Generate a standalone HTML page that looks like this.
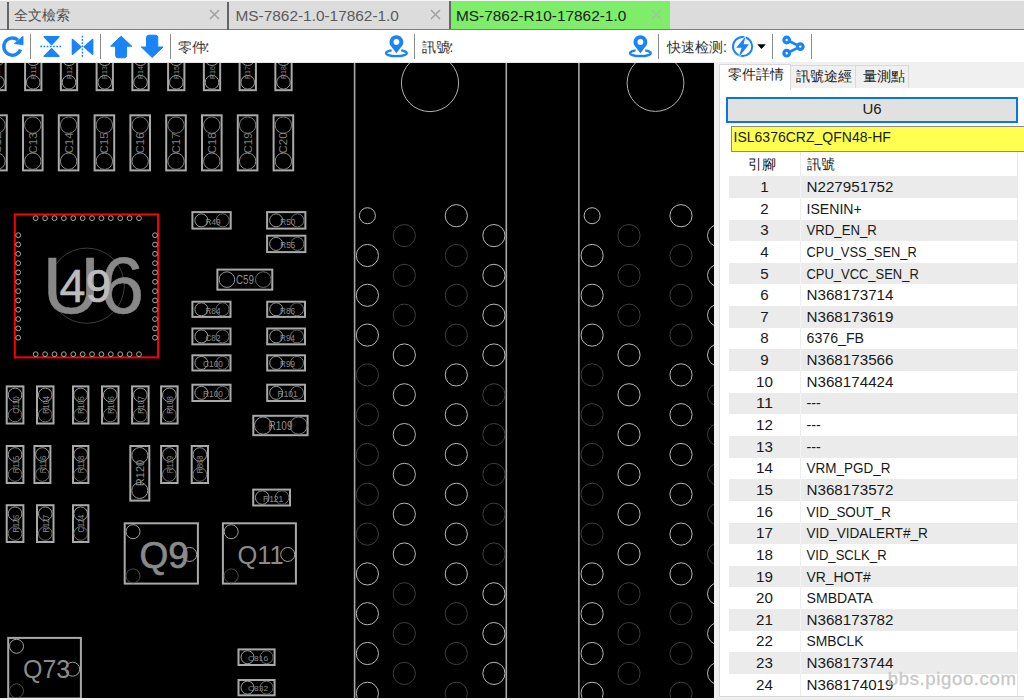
<!DOCTYPE html>
<html><head><meta charset="utf-8">
<style>
*{margin:0;padding:0;box-sizing:border-box}
html,body{width:1024px;height:700px;overflow:hidden;background:#f0f0f0;font-family:"Liberation Sans",sans-serif}
.abs{position:absolute}
#tabbar{left:0;top:0;width:1024px;height:30px;background:#dcdcdc;border-top:1px solid #f4f4f4;border-bottom:1px solid #7c7c7c}
.tsep{position:absolute;top:1px;width:2px;height:28px;background:#656565}
.ttxt{position:absolute;top:0;height:29px;line-height:29px;font-size:15.4px;color:#5a5a5a;white-space:nowrap}
.tx{position:absolute;top:8.2px;width:11px;height:11px}
#toolbar{left:0;top:30px;width:1024px;height:32px;background:#fff}
#tbline{left:0;top:62px;width:1024px;height:1px;background:#e6e6e6}
.sep{position:absolute;top:34px;width:1px;height:25px;background:#8a8a8a}
.lbl{position:absolute;top:36.8px;height:20px;line-height:20px;font-size:14px;color:#303030;white-space:nowrap}
#pcb{left:0;top:63px;width:714px;height:635px;background:#000;overflow:hidden}
#panel{left:714px;top:62px;width:310px;height:638px;background:#f0f0f0}
.row{position:absolute;left:729px;width:288px;height:21.64px;font-size:14.5px;color:#1a1a1a;line-height:23px}
.pin{position:absolute;left:0;width:70px;text-align:center}
.sig{position:absolute;left:77.5px;letter-spacing:0.35px}
</style></head><body>
<div id="tabbar" class="abs">
  <div class="tsep" style="left:6.5px"></div>
  <div class="ttxt" style="left:14px;color:#505050;font-size:14px">全文檢索</div>
  <svg class="tx" style="left:208.5px" viewBox="0 0 11 11"><path d="M1 1L10 10M10 1L1 10" stroke="#a2a2a2" stroke-width="1.6"/></svg>
  <div class="tsep" style="left:227px"></div>
  <div class="ttxt" style="left:235.5px">MS-7862-1.0-17862-1.0</div>
  <svg class="tx" style="left:429.5px" viewBox="0 0 11 11"><path d="M1 1L10 10M10 1L1 10" stroke="#a2a2a2" stroke-width="1.6"/></svg>
  <div class="abs" style="left:448.5px;top:0;width:221px;height:28px;background:#7ded6a;border-left:2px solid #666"></div>
  <div class="ttxt" style="left:456px;color:#1c1c1c">MS-7862-R10-17862-1.0</div>
  <svg class="tx" style="left:650.5px" viewBox="0 0 11 11"><path d="M1 1L10 10M10 1L1 10" stroke="#a8c0a4" stroke-width="1.6"/></svg>
</div>
<div id="toolbar" class="abs"></div>
<div id="tbline" class="abs"></div>
<!-- toolbar icons -->
<svg class="abs" style="left:0;top:30px" width="820" height="32" viewBox="0 30 820 32">
  <!-- refresh -->
  <path d="M20.5 49.5 A8.6 8.6 0 1 1 17.9 40" fill="none" stroke="#1a84f6" stroke-width="3.4"/>
  <path d="M23.1 36.3 L23.1 44.9 L14.1 43.6 Z" fill="#1a84f6" stroke="#1a84f6" stroke-width="0.6" stroke-linejoin="round"/>
  <!-- flip v -->
  <path d="M44.2 36.8 L59 36.8 L51.6 44.6 Z" fill="#1a84f6" stroke="#1a84f6" stroke-width="1.5" stroke-linejoin="round"/>
  <path d="M44.2 56.3 L59 56.3 L51.6 48.8 Z" fill="#1a84f6" stroke="#1a84f6" stroke-width="1.5" stroke-linejoin="round"/>
  <path d="M40.3 46.6 H62.3" stroke="#1a84f6" stroke-width="1.5" stroke-dasharray="1.7 1.5"/>
  <!-- flip h -->
  <path d="M72.5 39.5 L72.5 54.2 L80.8 46.8 Z" fill="#1a84f6" stroke="#1a84f6" stroke-width="1.6" stroke-linejoin="round"/>
  <path d="M92.6 39.5 L92.6 54.2 L84.3 46.8 Z" fill="#1a84f6" stroke="#1a84f6" stroke-width="1.6" stroke-linejoin="round"/>
  <path d="M82.4 35.8 V57.8" stroke="#1a84f6" stroke-width="1.5" stroke-dasharray="1.7 1.5"/>
  <!-- up arrow -->
  <path d="M121.2 36.2 L131.8 46.2 L126.6 46.2 L126.6 55.5 Q126.6 57.8 124.3 57.8 L118 57.8 Q115.6 57.8 115.6 55.5 L115.6 46.2 L110.6 46.2 Z" fill="#1a84f6" stroke="#1a84f6" stroke-width="1" stroke-linejoin="round"/>
  <!-- down arrow -->
  <path d="M152.2 57.5 L163 47 L157.8 47 L157.8 37.6 Q157.8 35.2 155.4 35.2 L149 35.2 Q146.5 35.2 146.5 37.6 L146.5 47 L141.3 47 Z" fill="#1a84f6" stroke="#1a84f6" stroke-width="1" stroke-linejoin="round"/>
  <!-- pin 1 -->
  <g id="pin">
    <path d="M396.4 53.2 L390.1 45 A6.9 6.9 0 1 1 402.7 45 Z" fill="#1a84f6"/>
    <circle cx="396.4" cy="42" r="2.9" fill="#fff"/>
    <path d="M391.6 50.37 A10.4 3.1 0 1 0 401.2 50.37" fill="none" stroke="#1a84f6" stroke-width="2.3"/>
  </g>
  <use href="#pin" x="244" y="0"/>
  <!-- lightning -->
  <circle cx="742.6" cy="46.5" r="9.6" fill="none" stroke="#1a84f6" stroke-width="2"/>
  <path d="M745.6 36.2 L736.2 47.8 L741.6 47.8 L738.6 57.4 L749 44.2 L743.6 44.2 Z" fill="#1a84f6" stroke="#fff" stroke-width="1.3" paint-order="stroke" stroke-linejoin="miter"/>
  <path d="M757.2 44.2 H765.8 L761.5 49 Z" fill="#000"/>
  <!-- share -->
  <path d="M786.7 40 L800.3 46.6 L786.7 53.2" fill="none" stroke="#1a84f6" stroke-width="2.7"/>
  <circle cx="786.7" cy="40" r="2.8" fill="#fff" stroke="#1a84f6" stroke-width="3.2"/>
  <circle cx="786.7" cy="53.2" r="2.8" fill="#fff" stroke="#1a84f6" stroke-width="3.2"/>
  <circle cx="800.3" cy="46.6" r="2.8" fill="#fff" stroke="#1a84f6" stroke-width="3.2"/>
</svg>
<div class="sep" style="left:30px"></div>
<div class="sep" style="left:100px"></div>
<div class="sep" style="left:170px"></div>
<div class="sep" style="left:414px"></div>
<div class="sep" style="left:658px"></div>
<div class="sep" style="left:772px"></div>
<div class="sep" style="left:811px"></div>
<div class="lbl" style="left:177.5px">零件:</div><div class="abs" style="left:202.5px;top:38.5px;font-size:11px;color:#555">y</div>
<div class="lbl" style="left:421.5px">訊號:</div><div class="abs" style="left:446.5px;top:38.5px;font-size:11px;color:#555">y</div>
<div class="lbl" style="left:667px">快速检测:</div>

<div id="pcb" class="abs">
<svg width="714" height="635" viewBox="0 63 714 635" style="display:block;font-family:'Liberation Sans',sans-serif">
<rect x="-10.65" y="41" width="16.3" height="49.2" fill="none" stroke="#a9a9a9" stroke-width="2"/>
<circle cx="-2.5" cy="82.3" r="6.8" fill="none" stroke="#9a9a9a" stroke-width="1"/>
<circle cx="-2.5" cy="58.5" r="7" fill="none" stroke="#9a9a9a" stroke-width="1"/>
<text x="-2.5" y="72.5" font-size="8" fill="#8a8a8a" text-anchor="middle" dominant-baseline="central" font-weight="normal" transform="rotate(-90 -2.5 72.5)" textLength="13" lengthAdjust="spacingAndGlyphs">R10</text>
<rect x="25.1" y="41" width="16.3" height="49.2" fill="none" stroke="#a9a9a9" stroke-width="2"/>
<circle cx="33.25" cy="82.3" r="6.8" fill="none" stroke="#9a9a9a" stroke-width="1"/>
<circle cx="33.25" cy="58.5" r="7" fill="none" stroke="#9a9a9a" stroke-width="1"/>
<text x="33.25" y="72.5" font-size="8" fill="#8a8a8a" text-anchor="middle" dominant-baseline="central" font-weight="normal" transform="rotate(-90 33.25 72.5)" textLength="13" lengthAdjust="spacingAndGlyphs">R11</text>
<rect x="60.85" y="41" width="16.3" height="49.2" fill="none" stroke="#a9a9a9" stroke-width="2"/>
<circle cx="69" cy="82.3" r="6.8" fill="none" stroke="#9a9a9a" stroke-width="1"/>
<circle cx="69" cy="58.5" r="7" fill="none" stroke="#9a9a9a" stroke-width="1"/>
<text x="69" y="72.5" font-size="8" fill="#8a8a8a" text-anchor="middle" dominant-baseline="central" font-weight="normal" transform="rotate(-90 69 72.5)" textLength="13" lengthAdjust="spacingAndGlyphs">R12</text>
<rect x="96.6" y="41" width="16.3" height="49.2" fill="none" stroke="#a9a9a9" stroke-width="2"/>
<circle cx="104.75" cy="82.3" r="6.8" fill="none" stroke="#9a9a9a" stroke-width="1"/>
<circle cx="104.75" cy="58.5" r="7" fill="none" stroke="#9a9a9a" stroke-width="1"/>
<text x="104.75" y="72.5" font-size="8" fill="#8a8a8a" text-anchor="middle" dominant-baseline="central" font-weight="normal" transform="rotate(-90 104.75 72.5)" textLength="13" lengthAdjust="spacingAndGlyphs">R13</text>
<rect x="132.35" y="41" width="16.3" height="49.2" fill="none" stroke="#a9a9a9" stroke-width="2"/>
<circle cx="140.5" cy="82.3" r="6.8" fill="none" stroke="#9a9a9a" stroke-width="1"/>
<circle cx="140.5" cy="58.5" r="7" fill="none" stroke="#9a9a9a" stroke-width="1"/>
<text x="140.5" y="72.5" font-size="8" fill="#8a8a8a" text-anchor="middle" dominant-baseline="central" font-weight="normal" transform="rotate(-90 140.5 72.5)" textLength="13" lengthAdjust="spacingAndGlyphs">R14</text>
<rect x="168.1" y="41" width="16.3" height="49.2" fill="none" stroke="#a9a9a9" stroke-width="2"/>
<circle cx="176.25" cy="82.3" r="6.8" fill="none" stroke="#9a9a9a" stroke-width="1"/>
<circle cx="176.25" cy="58.5" r="7" fill="none" stroke="#9a9a9a" stroke-width="1"/>
<text x="176.25" y="72.5" font-size="8" fill="#8a8a8a" text-anchor="middle" dominant-baseline="central" font-weight="normal" transform="rotate(-90 176.25 72.5)" textLength="13" lengthAdjust="spacingAndGlyphs">R15</text>
<rect x="203.85" y="41" width="16.3" height="49.2" fill="none" stroke="#a9a9a9" stroke-width="2"/>
<circle cx="212" cy="82.3" r="6.8" fill="none" stroke="#9a9a9a" stroke-width="1"/>
<circle cx="212" cy="58.5" r="7" fill="none" stroke="#9a9a9a" stroke-width="1"/>
<text x="212" y="72.5" font-size="8" fill="#8a8a8a" text-anchor="middle" dominant-baseline="central" font-weight="normal" transform="rotate(-90 212 72.5)" textLength="13" lengthAdjust="spacingAndGlyphs">R16</text>
<rect x="239.6" y="41" width="16.3" height="49.2" fill="none" stroke="#a9a9a9" stroke-width="2"/>
<circle cx="247.75" cy="82.3" r="6.8" fill="none" stroke="#9a9a9a" stroke-width="1"/>
<circle cx="247.75" cy="58.5" r="7" fill="none" stroke="#9a9a9a" stroke-width="1"/>
<text x="247.75" y="72.5" font-size="8" fill="#8a8a8a" text-anchor="middle" dominant-baseline="central" font-weight="normal" transform="rotate(-90 247.75 72.5)" textLength="13" lengthAdjust="spacingAndGlyphs">R17</text>
<rect x="275.35" y="41" width="16.3" height="49.2" fill="none" stroke="#a9a9a9" stroke-width="2"/>
<circle cx="283.5" cy="82.3" r="6.8" fill="none" stroke="#9a9a9a" stroke-width="1"/>
<circle cx="283.5" cy="58.5" r="7" fill="none" stroke="#9a9a9a" stroke-width="1"/>
<text x="283.5" y="72.5" font-size="8" fill="#8a8a8a" text-anchor="middle" dominant-baseline="central" font-weight="normal" transform="rotate(-90 283.5 72.5)" textLength="13" lengthAdjust="spacingAndGlyphs">R18</text>
<rect x="-12.8" y="115.3" width="19.6" height="55.1" fill="none" stroke="#a9a9a9" stroke-width="2"/>
<circle cx="-3" cy="125.1" r="8.2" fill="none" stroke="#7a7a7a" stroke-width="1"/>
<circle cx="-3" cy="161.2" r="8.2" fill="none" stroke="#8a8a8a" stroke-width="1"/>
<text x="-3" y="143" font-size="11.5" fill="#808080" text-anchor="middle" dominant-baseline="central" font-weight="normal" transform="rotate(-90 -3 143)">C12</text>
<rect x="23" y="115.3" width="19.6" height="55.1" fill="none" stroke="#a9a9a9" stroke-width="2"/>
<circle cx="32.8" cy="125.1" r="8.2" fill="none" stroke="#7a7a7a" stroke-width="1"/>
<circle cx="32.8" cy="161.2" r="8.2" fill="none" stroke="#8a8a8a" stroke-width="1"/>
<text x="32.8" y="143" font-size="11.5" fill="#808080" text-anchor="middle" dominant-baseline="central" font-weight="normal" transform="rotate(-90 32.8 143)">C13</text>
<rect x="58.8" y="115.3" width="19.6" height="55.1" fill="none" stroke="#a9a9a9" stroke-width="2"/>
<circle cx="68.6" cy="125.1" r="8.2" fill="none" stroke="#7a7a7a" stroke-width="1"/>
<circle cx="68.6" cy="161.2" r="8.2" fill="none" stroke="#8a8a8a" stroke-width="1"/>
<text x="68.6" y="143" font-size="11.5" fill="#808080" text-anchor="middle" dominant-baseline="central" font-weight="normal" transform="rotate(-90 68.6 143)">C14</text>
<rect x="94.6" y="115.3" width="19.6" height="55.1" fill="none" stroke="#a9a9a9" stroke-width="2"/>
<circle cx="104.4" cy="125.1" r="8.2" fill="none" stroke="#7a7a7a" stroke-width="1"/>
<circle cx="104.4" cy="161.2" r="8.2" fill="none" stroke="#8a8a8a" stroke-width="1"/>
<text x="104.4" y="143" font-size="11.5" fill="#808080" text-anchor="middle" dominant-baseline="central" font-weight="normal" transform="rotate(-90 104.4 143)">C15</text>
<rect x="130.4" y="115.3" width="19.6" height="55.1" fill="none" stroke="#a9a9a9" stroke-width="2"/>
<circle cx="140.2" cy="125.1" r="8.2" fill="none" stroke="#7a7a7a" stroke-width="1"/>
<circle cx="140.2" cy="161.2" r="8.2" fill="none" stroke="#8a8a8a" stroke-width="1"/>
<text x="140.2" y="143" font-size="11.5" fill="#808080" text-anchor="middle" dominant-baseline="central" font-weight="normal" transform="rotate(-90 140.2 143)">C16</text>
<rect x="166.2" y="115.3" width="19.6" height="55.1" fill="none" stroke="#a9a9a9" stroke-width="2"/>
<circle cx="176" cy="125.1" r="8.2" fill="none" stroke="#7a7a7a" stroke-width="1"/>
<circle cx="176" cy="161.2" r="8.2" fill="none" stroke="#8a8a8a" stroke-width="1"/>
<text x="176" y="143" font-size="11.5" fill="#808080" text-anchor="middle" dominant-baseline="central" font-weight="normal" transform="rotate(-90 176 143)">C17</text>
<rect x="202" y="115.3" width="19.6" height="55.1" fill="none" stroke="#a9a9a9" stroke-width="2"/>
<circle cx="211.8" cy="125.1" r="8.2" fill="none" stroke="#7a7a7a" stroke-width="1"/>
<circle cx="211.8" cy="161.2" r="8.2" fill="none" stroke="#8a8a8a" stroke-width="1"/>
<text x="211.8" y="143" font-size="11.5" fill="#808080" text-anchor="middle" dominant-baseline="central" font-weight="normal" transform="rotate(-90 211.8 143)">C18</text>
<rect x="237.8" y="115.3" width="19.6" height="55.1" fill="none" stroke="#a9a9a9" stroke-width="2"/>
<circle cx="247.6" cy="125.1" r="8.2" fill="none" stroke="#7a7a7a" stroke-width="1"/>
<circle cx="247.6" cy="161.2" r="8.2" fill="none" stroke="#8a8a8a" stroke-width="1"/>
<text x="247.6" y="143" font-size="11.5" fill="#808080" text-anchor="middle" dominant-baseline="central" font-weight="normal" transform="rotate(-90 247.6 143)">C19</text>
<rect x="273.6" y="115.3" width="19.6" height="55.1" fill="none" stroke="#a9a9a9" stroke-width="2"/>
<circle cx="283.4" cy="125.1" r="8.2" fill="none" stroke="#7a7a7a" stroke-width="1"/>
<circle cx="283.4" cy="161.2" r="8.2" fill="none" stroke="#8a8a8a" stroke-width="1"/>
<text x="283.4" y="143" font-size="11.5" fill="#808080" text-anchor="middle" dominant-baseline="central" font-weight="normal" transform="rotate(-90 283.4 143)">C20</text>
<rect x="14.8" y="214.4" width="143.3" height="143" fill="none" stroke="#ff0000" stroke-width="2"/>
<circle cx="35.7" cy="218.2" r="2.4" fill="none" stroke="#a8a8a8" stroke-width="1"/>
<circle cx="35.7" cy="354.2" r="2.4" fill="none" stroke="#a8a8a8" stroke-width="1"/>
<circle cx="18.2" cy="235.2" r="2.4" fill="none" stroke="#a8a8a8" stroke-width="1"/>
<circle cx="155" cy="235.2" r="2.4" fill="none" stroke="#a8a8a8" stroke-width="1"/>
<circle cx="45.09" cy="218.2" r="2.4" fill="none" stroke="#a8a8a8" stroke-width="1"/>
<circle cx="45.09" cy="354.2" r="2.4" fill="none" stroke="#a8a8a8" stroke-width="1"/>
<circle cx="18.2" cy="244.52" r="2.4" fill="none" stroke="#a8a8a8" stroke-width="1"/>
<circle cx="155" cy="244.52" r="2.4" fill="none" stroke="#a8a8a8" stroke-width="1"/>
<circle cx="54.48" cy="218.2" r="2.4" fill="none" stroke="#a8a8a8" stroke-width="1"/>
<circle cx="54.48" cy="354.2" r="2.4" fill="none" stroke="#a8a8a8" stroke-width="1"/>
<circle cx="18.2" cy="253.84" r="2.4" fill="none" stroke="#a8a8a8" stroke-width="1"/>
<circle cx="155" cy="253.84" r="2.4" fill="none" stroke="#a8a8a8" stroke-width="1"/>
<circle cx="63.87" cy="218.2" r="2.4" fill="none" stroke="#a8a8a8" stroke-width="1"/>
<circle cx="63.87" cy="354.2" r="2.4" fill="none" stroke="#a8a8a8" stroke-width="1"/>
<circle cx="18.2" cy="263.16" r="2.4" fill="none" stroke="#a8a8a8" stroke-width="1"/>
<circle cx="155" cy="263.16" r="2.4" fill="none" stroke="#a8a8a8" stroke-width="1"/>
<circle cx="73.26" cy="218.2" r="2.4" fill="none" stroke="#a8a8a8" stroke-width="1"/>
<circle cx="73.26" cy="354.2" r="2.4" fill="none" stroke="#a8a8a8" stroke-width="1"/>
<circle cx="18.2" cy="272.48" r="2.4" fill="none" stroke="#a8a8a8" stroke-width="1"/>
<circle cx="155" cy="272.48" r="2.4" fill="none" stroke="#a8a8a8" stroke-width="1"/>
<circle cx="82.65" cy="218.2" r="2.4" fill="none" stroke="#a8a8a8" stroke-width="1"/>
<circle cx="82.65" cy="354.2" r="2.4" fill="none" stroke="#a8a8a8" stroke-width="1"/>
<circle cx="18.2" cy="281.8" r="2.4" fill="none" stroke="#a8a8a8" stroke-width="1"/>
<circle cx="155" cy="281.8" r="2.4" fill="none" stroke="#a8a8a8" stroke-width="1"/>
<circle cx="92.04" cy="218.2" r="2.4" fill="none" stroke="#a8a8a8" stroke-width="1"/>
<circle cx="92.04" cy="354.2" r="2.4" fill="none" stroke="#a8a8a8" stroke-width="1"/>
<circle cx="18.2" cy="291.12" r="2.4" fill="none" stroke="#a8a8a8" stroke-width="1"/>
<circle cx="155" cy="291.12" r="2.4" fill="none" stroke="#a8a8a8" stroke-width="1"/>
<circle cx="101.43" cy="218.2" r="2.4" fill="none" stroke="#a8a8a8" stroke-width="1"/>
<circle cx="101.43" cy="354.2" r="2.4" fill="none" stroke="#a8a8a8" stroke-width="1"/>
<circle cx="18.2" cy="300.44" r="2.4" fill="none" stroke="#a8a8a8" stroke-width="1"/>
<circle cx="155" cy="300.44" r="2.4" fill="none" stroke="#a8a8a8" stroke-width="1"/>
<circle cx="110.82" cy="218.2" r="2.4" fill="none" stroke="#a8a8a8" stroke-width="1"/>
<circle cx="110.82" cy="354.2" r="2.4" fill="none" stroke="#a8a8a8" stroke-width="1"/>
<circle cx="18.2" cy="309.76" r="2.4" fill="none" stroke="#a8a8a8" stroke-width="1"/>
<circle cx="155" cy="309.76" r="2.4" fill="none" stroke="#a8a8a8" stroke-width="1"/>
<circle cx="120.21" cy="218.2" r="2.4" fill="none" stroke="#a8a8a8" stroke-width="1"/>
<circle cx="120.21" cy="354.2" r="2.4" fill="none" stroke="#a8a8a8" stroke-width="1"/>
<circle cx="18.2" cy="319.08" r="2.4" fill="none" stroke="#a8a8a8" stroke-width="1"/>
<circle cx="155" cy="319.08" r="2.4" fill="none" stroke="#a8a8a8" stroke-width="1"/>
<circle cx="129.6" cy="218.2" r="2.4" fill="none" stroke="#a8a8a8" stroke-width="1"/>
<circle cx="129.6" cy="354.2" r="2.4" fill="none" stroke="#a8a8a8" stroke-width="1"/>
<circle cx="18.2" cy="328.4" r="2.4" fill="none" stroke="#a8a8a8" stroke-width="1"/>
<circle cx="155" cy="328.4" r="2.4" fill="none" stroke="#a8a8a8" stroke-width="1"/>
<circle cx="138.99" cy="218.2" r="2.4" fill="none" stroke="#a8a8a8" stroke-width="1"/>
<circle cx="138.99" cy="354.2" r="2.4" fill="none" stroke="#a8a8a8" stroke-width="1"/>
<circle cx="18.2" cy="337.72" r="2.4" fill="none" stroke="#a8a8a8" stroke-width="1"/>
<circle cx="155" cy="337.72" r="2.4" fill="none" stroke="#a8a8a8" stroke-width="1"/>
<circle cx="86.7" cy="285.7" r="37.6" fill="none" stroke="#3c3c3c" stroke-width="1"/>
<text x="42.5" y="313.2" font-size="79.5" fill="#888" stroke="#888" stroke-width="0.5" text-anchor="start">U6</text>
<text x="59.6" y="302.3" font-size="46.5" fill="#bcbcbc" stroke="#bcbcbc" stroke-width="0.6" text-anchor="start">49</text>
<rect x="192.4" y="212.1" width="38.3" height="16.5" fill="none" stroke="#a9a9a9" stroke-width="2"/>
<circle cx="201.4" cy="220.35" r="6.5" fill="none" stroke="#9a9a9a" stroke-width="1"/>
<circle cx="222.7" cy="220.35" r="6.5" fill="none" stroke="#6a6a6a" stroke-width="1"/>
<text x="213.05" y="221.35" font-size="9.6" fill="#8a8a8a" text-anchor="middle" dominant-baseline="central" font-weight="normal" textLength="15" lengthAdjust="spacingAndGlyphs">R49</text>
<rect x="267.1" y="212.1" width="38.3" height="16.5" fill="none" stroke="#a9a9a9" stroke-width="2"/>
<circle cx="276.1" cy="220.35" r="6.5" fill="none" stroke="#9a9a9a" stroke-width="1"/>
<circle cx="297.4" cy="220.35" r="6.5" fill="none" stroke="#6a6a6a" stroke-width="1"/>
<text x="287.75" y="221.35" font-size="9.6" fill="#8a8a8a" text-anchor="middle" dominant-baseline="central" font-weight="normal" textLength="15" lengthAdjust="spacingAndGlyphs">R50</text>
<rect x="267.1" y="235.7" width="38.3" height="16.4" fill="none" stroke="#a9a9a9" stroke-width="2"/>
<circle cx="276.1" cy="243.9" r="6.5" fill="none" stroke="#9a9a9a" stroke-width="1"/>
<circle cx="297.4" cy="243.9" r="6.5" fill="none" stroke="#6a6a6a" stroke-width="1"/>
<text x="287.75" y="244.9" font-size="9.6" fill="#8a8a8a" text-anchor="middle" dominant-baseline="central" font-weight="normal" textLength="15" lengthAdjust="spacingAndGlyphs">R55</text>
<rect x="217.4" y="269.6" width="54.9" height="20.1" fill="none" stroke="#a9a9a9" stroke-width="2"/>
<circle cx="226.9" cy="279.6" r="7.8" fill="none" stroke="#9a9a9a" stroke-width="1"/>
<circle cx="263.3" cy="279.6" r="7.8" fill="none" stroke="#6a6a6a" stroke-width="1"/>
<text x="245" y="280" font-size="12" fill="#8c8c8c" text-anchor="middle" dominant-baseline="central" font-weight="normal" textLength="18" lengthAdjust="spacingAndGlyphs">C59</text>
<rect x="192.4" y="301.7" width="38.1" height="15.2" fill="none" stroke="#a9a9a9" stroke-width="2"/>
<circle cx="201.4" cy="309.3" r="6.5" fill="none" stroke="#9a9a9a" stroke-width="1"/>
<circle cx="222.5" cy="309.3" r="6.5" fill="none" stroke="#6a6a6a" stroke-width="1"/>
<text x="212.95" y="310.3" font-size="9.6" fill="#8a8a8a" text-anchor="middle" dominant-baseline="central" font-weight="normal" textLength="15" lengthAdjust="spacingAndGlyphs">R84</text>
<rect x="267.2" y="301.7" width="37.8" height="15.2" fill="none" stroke="#a9a9a9" stroke-width="2"/>
<circle cx="276.2" cy="309.3" r="6.5" fill="none" stroke="#9a9a9a" stroke-width="1"/>
<circle cx="297" cy="309.3" r="6.5" fill="none" stroke="#6a6a6a" stroke-width="1"/>
<text x="287.6" y="310.3" font-size="9.6" fill="#8a8a8a" text-anchor="middle" dominant-baseline="central" font-weight="normal" textLength="15" lengthAdjust="spacingAndGlyphs">R86</text>
<rect x="192.4" y="328.5" width="38.1" height="15.8" fill="none" stroke="#a9a9a9" stroke-width="2"/>
<circle cx="201.4" cy="336.4" r="6.5" fill="none" stroke="#9a9a9a" stroke-width="1"/>
<circle cx="222.5" cy="336.4" r="6.5" fill="none" stroke="#6a6a6a" stroke-width="1"/>
<text x="212.95" y="337.4" font-size="9.6" fill="#8a8a8a" text-anchor="middle" dominant-baseline="central" font-weight="normal" textLength="15" lengthAdjust="spacingAndGlyphs">C82</text>
<rect x="267.2" y="328.5" width="37.8" height="15.8" fill="none" stroke="#a9a9a9" stroke-width="2"/>
<circle cx="276.2" cy="336.4" r="6.5" fill="none" stroke="#9a9a9a" stroke-width="1"/>
<circle cx="297" cy="336.4" r="6.5" fill="none" stroke="#6a6a6a" stroke-width="1"/>
<text x="287.6" y="337.4" font-size="9.6" fill="#8a8a8a" text-anchor="middle" dominant-baseline="central" font-weight="normal" textLength="15" lengthAdjust="spacingAndGlyphs">R94</text>
<rect x="192.4" y="355.3" width="38.1" height="15.2" fill="none" stroke="#a9a9a9" stroke-width="2"/>
<circle cx="201.4" cy="362.9" r="6.5" fill="none" stroke="#9a9a9a" stroke-width="1"/>
<circle cx="222.5" cy="362.9" r="6.5" fill="none" stroke="#6a6a6a" stroke-width="1"/>
<text x="212.95" y="363.9" font-size="9.6" fill="#8a8a8a" text-anchor="middle" dominant-baseline="central" font-weight="normal" textLength="20" lengthAdjust="spacingAndGlyphs">C100</text>
<rect x="267.2" y="355.3" width="37.8" height="15.2" fill="none" stroke="#a9a9a9" stroke-width="2"/>
<circle cx="276.2" cy="362.9" r="6.5" fill="none" stroke="#9a9a9a" stroke-width="1"/>
<circle cx="297" cy="362.9" r="6.5" fill="none" stroke="#6a6a6a" stroke-width="1"/>
<text x="287.6" y="363.9" font-size="9.6" fill="#8a8a8a" text-anchor="middle" dominant-baseline="central" font-weight="normal" textLength="15" lengthAdjust="spacingAndGlyphs">R99</text>
<rect x="192.4" y="384.7" width="38.1" height="16.3" fill="none" stroke="#a9a9a9" stroke-width="2"/>
<circle cx="201.4" cy="392.85" r="6.5" fill="none" stroke="#9a9a9a" stroke-width="1"/>
<circle cx="222.5" cy="392.85" r="6.5" fill="none" stroke="#6a6a6a" stroke-width="1"/>
<text x="212.95" y="393.85" font-size="9.6" fill="#8a8a8a" text-anchor="middle" dominant-baseline="central" font-weight="normal" textLength="20" lengthAdjust="spacingAndGlyphs">R100</text>
<rect x="267.2" y="384.7" width="37.8" height="16.3" fill="none" stroke="#a9a9a9" stroke-width="2"/>
<circle cx="276.2" cy="392.85" r="6.5" fill="none" stroke="#9a9a9a" stroke-width="1"/>
<circle cx="297" cy="392.85" r="6.5" fill="none" stroke="#6a6a6a" stroke-width="1"/>
<text x="287.6" y="393.85" font-size="9.6" fill="#8a8a8a" text-anchor="middle" dominant-baseline="central" font-weight="normal" textLength="20" lengthAdjust="spacingAndGlyphs">R101</text>
<rect x="253.3" y="415.8" width="54.3" height="19.4" fill="none" stroke="#a9a9a9" stroke-width="2"/>
<circle cx="263.1" cy="425.6" r="8.6" fill="none" stroke="#9a9a9a" stroke-width="1"/>
<circle cx="298.6" cy="425.6" r="8.6" fill="none" stroke="#7a7a7a" stroke-width="1"/>
<text x="280.5" y="426" font-size="12" fill="#8c8c8c" text-anchor="middle" dominant-baseline="central" font-weight="normal" textLength="24" lengthAdjust="spacingAndGlyphs">R109</text>
<rect x="253.2" y="489.6" width="36.8" height="15.9" fill="none" stroke="#a9a9a9" stroke-width="2"/>
<circle cx="262.2" cy="497.55" r="6.8" fill="none" stroke="#9a9a9a" stroke-width="1"/>
<circle cx="282" cy="497.55" r="6.8" fill="none" stroke="#6a6a6a" stroke-width="1"/>
<text x="273.1" y="498.55" font-size="9" fill="#8a8a8a" text-anchor="middle" dominant-baseline="central" font-weight="normal" textLength="20" lengthAdjust="spacingAndGlyphs">R121</text>
<rect x="238.5" y="649.4" width="36.1" height="15.6" fill="none" stroke="#a9a9a9" stroke-width="2"/>
<circle cx="247.5" cy="657.2" r="6.5" fill="none" stroke="#9a9a9a" stroke-width="1"/>
<circle cx="266.6" cy="657.2" r="6.5" fill="none" stroke="#6a6a6a" stroke-width="1"/>
<text x="258.05" y="658.2" font-size="8" fill="#8a8a8a" text-anchor="middle" dominant-baseline="central" font-weight="normal" textLength="20" lengthAdjust="spacingAndGlyphs">C816</text>
<rect x="238.5" y="680" width="36.1" height="15.3" fill="none" stroke="#a9a9a9" stroke-width="2"/>
<circle cx="247.5" cy="687.65" r="6.5" fill="none" stroke="#9a9a9a" stroke-width="1"/>
<circle cx="266.6" cy="687.65" r="6.5" fill="none" stroke="#6a6a6a" stroke-width="1"/>
<text x="258.05" y="688.65" font-size="8" fill="#8a8a8a" text-anchor="middle" dominant-baseline="central" font-weight="normal" textLength="20" lengthAdjust="spacingAndGlyphs">C832</text>
<rect x="6.7" y="386.4" width="16.7" height="37.1" fill="none" stroke="#a9a9a9" stroke-width="2"/>
<circle cx="15.05" cy="394.9" r="6.8" fill="none" stroke="#9a9a9a" stroke-width="1"/>
<circle cx="15.05" cy="415" r="6.8" fill="none" stroke="#6f6f6f" stroke-width="1"/>
<text x="15.55" y="404.95" font-size="8.5" fill="#8a8a8a" text-anchor="middle" dominant-baseline="central" font-weight="normal" transform="rotate(-90 15.55 404.95)" textLength="17.6" lengthAdjust="spacingAndGlyphs">C110</text>
<rect x="37" y="386.4" width="16.5" height="37.1" fill="none" stroke="#a9a9a9" stroke-width="2"/>
<circle cx="45.25" cy="394.9" r="6.8" fill="none" stroke="#9a9a9a" stroke-width="1"/>
<circle cx="45.25" cy="415" r="6.8" fill="none" stroke="#6f6f6f" stroke-width="1"/>
<text x="45.75" y="404.95" font-size="8.5" fill="#8a8a8a" text-anchor="middle" dominant-baseline="central" font-weight="normal" transform="rotate(-90 45.75 404.95)" textLength="17.6" lengthAdjust="spacingAndGlyphs">R104</text>
<rect x="73" y="386.4" width="15.4" height="37.1" fill="none" stroke="#a9a9a9" stroke-width="2"/>
<circle cx="80.7" cy="394.9" r="6.8" fill="none" stroke="#9a9a9a" stroke-width="1"/>
<circle cx="80.7" cy="415" r="6.8" fill="none" stroke="#6f6f6f" stroke-width="1"/>
<text x="81.2" y="404.95" font-size="8.5" fill="#8a8a8a" text-anchor="middle" dominant-baseline="central" font-weight="normal" transform="rotate(-90 81.2 404.95)" textLength="17.6" lengthAdjust="spacingAndGlyphs">R105</text>
<rect x="102" y="386.4" width="16.5" height="37.1" fill="none" stroke="#a9a9a9" stroke-width="2"/>
<circle cx="110.25" cy="394.9" r="6.8" fill="none" stroke="#9a9a9a" stroke-width="1"/>
<circle cx="110.25" cy="415" r="6.8" fill="none" stroke="#6f6f6f" stroke-width="1"/>
<text x="110.75" y="404.95" font-size="8.5" fill="#8a8a8a" text-anchor="middle" dominant-baseline="central" font-weight="normal" transform="rotate(-90 110.75 404.95)" textLength="17.6" lengthAdjust="spacingAndGlyphs">R106</text>
<rect x="132.1" y="386.4" width="16.5" height="37.1" fill="none" stroke="#a9a9a9" stroke-width="2"/>
<circle cx="140.35" cy="394.9" r="6.8" fill="none" stroke="#9a9a9a" stroke-width="1"/>
<circle cx="140.35" cy="415" r="6.8" fill="none" stroke="#6f6f6f" stroke-width="1"/>
<text x="140.85" y="404.95" font-size="8.5" fill="#8a8a8a" text-anchor="middle" dominant-baseline="central" font-weight="normal" transform="rotate(-90 140.85 404.95)" textLength="17.6" lengthAdjust="spacingAndGlyphs">R107</text>
<rect x="161.1" y="386.4" width="16.5" height="37.1" fill="none" stroke="#a9a9a9" stroke-width="2"/>
<circle cx="169.35" cy="394.9" r="6.8" fill="none" stroke="#9a9a9a" stroke-width="1"/>
<circle cx="169.35" cy="415" r="6.8" fill="none" stroke="#6f6f6f" stroke-width="1"/>
<text x="169.85" y="404.95" font-size="8.5" fill="#8a8a8a" text-anchor="middle" dominant-baseline="central" font-weight="normal" transform="rotate(-90 169.85 404.95)" textLength="17.6" lengthAdjust="spacingAndGlyphs">R108</text>
<rect x="6.7" y="446" width="16.7" height="37" fill="none" stroke="#a9a9a9" stroke-width="2"/>
<circle cx="15.05" cy="454.5" r="6.8" fill="none" stroke="#9a9a9a" stroke-width="1"/>
<circle cx="15.05" cy="474.5" r="6.8" fill="none" stroke="#6f6f6f" stroke-width="1"/>
<text x="15.55" y="464.5" font-size="8.5" fill="#8a8a8a" text-anchor="middle" dominant-baseline="central" font-weight="normal" transform="rotate(-90 15.55 464.5)" textLength="17.6" lengthAdjust="spacingAndGlyphs">R115</text>
<rect x="34.4" y="446" width="16" height="37" fill="none" stroke="#a9a9a9" stroke-width="2"/>
<circle cx="42.4" cy="454.5" r="6.8" fill="none" stroke="#9a9a9a" stroke-width="1"/>
<circle cx="42.4" cy="474.5" r="6.8" fill="none" stroke="#6f6f6f" stroke-width="1"/>
<text x="42.9" y="464.5" font-size="8.5" fill="#8a8a8a" text-anchor="middle" dominant-baseline="central" font-weight="normal" transform="rotate(-90 42.9 464.5)" textLength="17.6" lengthAdjust="spacingAndGlyphs">R116</text>
<rect x="73" y="446" width="15.4" height="37" fill="none" stroke="#a9a9a9" stroke-width="2"/>
<circle cx="80.7" cy="454.5" r="6.8" fill="none" stroke="#9a9a9a" stroke-width="1"/>
<circle cx="80.7" cy="474.5" r="6.8" fill="none" stroke="#6f6f6f" stroke-width="1"/>
<text x="81.2" y="464.5" font-size="8.5" fill="#8a8a8a" text-anchor="middle" dominant-baseline="central" font-weight="normal" transform="rotate(-90 81.2 464.5)" textLength="17.6" lengthAdjust="spacingAndGlyphs">R118</text>
<rect x="161.1" y="446" width="16.5" height="37" fill="none" stroke="#a9a9a9" stroke-width="2"/>
<circle cx="169.35" cy="454.5" r="6.8" fill="none" stroke="#9a9a9a" stroke-width="1"/>
<circle cx="169.35" cy="474.5" r="6.8" fill="none" stroke="#6f6f6f" stroke-width="1"/>
<text x="169.85" y="464.5" font-size="8.5" fill="#8a8a8a" text-anchor="middle" dominant-baseline="central" font-weight="normal" transform="rotate(-90 169.85 464.5)" textLength="17.6" lengthAdjust="spacingAndGlyphs">R119</text>
<rect x="191.7" y="446" width="16.3" height="37" fill="none" stroke="#a9a9a9" stroke-width="2"/>
<circle cx="199.85" cy="454.5" r="6.8" fill="none" stroke="#9a9a9a" stroke-width="1"/>
<circle cx="199.85" cy="474.5" r="6.8" fill="none" stroke="#6f6f6f" stroke-width="1"/>
<text x="200.35" y="464.5" font-size="8.5" fill="#8a8a8a" text-anchor="middle" dominant-baseline="central" font-weight="normal" transform="rotate(-90 200.35 464.5)" textLength="17.6" lengthAdjust="spacingAndGlyphs">R868</text>
<rect x="130.3" y="446" width="19" height="54.6" fill="none" stroke="#a9a9a9" stroke-width="2"/>
<circle cx="139.8" cy="455.5" r="8" fill="none" stroke="#9a9a9a" stroke-width="1"/>
<circle cx="139.8" cy="490.5" r="8" fill="none" stroke="#9a9a9a" stroke-width="1"/>
<text x="139.8" y="473" font-size="11" fill="#8c8c8c" text-anchor="middle" dominant-baseline="central" font-weight="normal" transform="rotate(-90 139.8 473)">R120</text>
<rect x="6.7" y="505.2" width="16.7" height="36.8" fill="none" stroke="#a9a9a9" stroke-width="2"/>
<circle cx="15.05" cy="513.7" r="6.8" fill="none" stroke="#9a9a9a" stroke-width="1"/>
<circle cx="15.05" cy="533.5" r="6.8" fill="none" stroke="#6f6f6f" stroke-width="1"/>
<text x="15.55" y="523.6" font-size="8.5" fill="#8a8a8a" text-anchor="middle" dominant-baseline="central" font-weight="normal" transform="rotate(-90 15.55 523.6)" textLength="17.6" lengthAdjust="spacingAndGlyphs">R126</text>
<rect x="37" y="505.2" width="16.5" height="36.8" fill="none" stroke="#a9a9a9" stroke-width="2"/>
<circle cx="45.25" cy="513.7" r="6.8" fill="none" stroke="#9a9a9a" stroke-width="1"/>
<circle cx="45.25" cy="533.5" r="6.8" fill="none" stroke="#6f6f6f" stroke-width="1"/>
<text x="45.75" y="523.6" font-size="8.5" fill="#8a8a8a" text-anchor="middle" dominant-baseline="central" font-weight="normal" transform="rotate(-90 45.75 523.6)" textLength="17.6" lengthAdjust="spacingAndGlyphs">R127</text>
<rect x="73" y="505.2" width="15.4" height="36.8" fill="none" stroke="#a9a9a9" stroke-width="2"/>
<circle cx="80.7" cy="513.7" r="6.8" fill="none" stroke="#9a9a9a" stroke-width="1"/>
<circle cx="80.7" cy="533.5" r="6.8" fill="none" stroke="#6f6f6f" stroke-width="1"/>
<text x="81.2" y="523.6" font-size="8.5" fill="#8a8a8a" text-anchor="middle" dominant-baseline="central" font-weight="normal" transform="rotate(-90 81.2 523.6)" textLength="17.6" lengthAdjust="spacingAndGlyphs">C124</text>
<rect x="124.7" y="523.3" width="73.2" height="60.3" fill="none" stroke="#a9a9a9" stroke-width="2"/>
<circle cx="133" cy="531.7" r="7" fill="none" stroke="#a0a0a0" stroke-width="1"/>
<circle cx="133" cy="575.9" r="7" fill="none" stroke="#4a4a4a" stroke-width="1"/>
<circle cx="189.7" cy="554.45" r="7" fill="none" stroke="#a0a0a0" stroke-width="1"/>
<text x="139.5" y="567.5" font-size="37" fill="#8a8a8a" stroke="#8a8a8a" stroke-width="0.7" font-weight="normal">Q9</text>
<rect x="222.9" y="523.3" width="73" height="60.3" fill="none" stroke="#a9a9a9" stroke-width="2"/>
<circle cx="231.2" cy="531.7" r="7" fill="none" stroke="#a0a0a0" stroke-width="1"/>
<circle cx="231.2" cy="575.9" r="7" fill="none" stroke="#4a4a4a" stroke-width="1"/>
<circle cx="287.7" cy="554.45" r="7" fill="none" stroke="#a0a0a0" stroke-width="1"/>
<text x="237.5" y="563.7" font-size="25.5" fill="#8a8a8a" font-weight="normal">Q11</text>
<rect x="8.2" y="637.9" width="72.7" height="60.6" fill="none" stroke="#a9a9a9" stroke-width="2"/>
<circle cx="16.5" cy="646.3" r="7" fill="none" stroke="#a0a0a0" stroke-width="1"/>
<circle cx="16.5" cy="690.8" r="7" fill="none" stroke="#4a4a4a" stroke-width="1"/>
<circle cx="72.7" cy="669.2" r="7" fill="none" stroke="#a0a0a0" stroke-width="1"/>
<text x="23" y="677.5" font-size="25" fill="#8a8a8a" font-weight="normal">Q73</text>
<rect x="353.8" y="63" width="1.6" height="640" fill="#a8a8a8"/>
<rect x="505.5" y="63" width="1.6" height="640" fill="#a8a8a8"/>
<rect x="578.1" y="63" width="1.6" height="640" fill="#a8a8a8"/>
<circle cx="430" cy="83" r="28.6" fill="none" stroke="#b0b0b0" stroke-width="1"/>
<circle cx="655.5" cy="83" r="28.4" fill="none" stroke="#b0b0b0" stroke-width="1"/>
<circle cx="367.4" cy="215.7" r="8" fill="none" stroke="#b8b8b8" stroke-width="1"/>
<circle cx="367.4" cy="255.5" r="11.1" fill="none" stroke="#b8b8b8" stroke-width="1"/>
<circle cx="367.4" cy="295.3" r="11.1" fill="none" stroke="#b8b8b8" stroke-width="1"/>
<circle cx="367.4" cy="335.1" r="11.1" fill="none" stroke="#b8b8b8" stroke-width="1"/>
<circle cx="367.4" cy="374.9" r="11.1" fill="none" stroke="#3e3e3e" stroke-width="1"/>
<circle cx="367.4" cy="414.7" r="11.1" fill="none" stroke="#3e3e3e" stroke-width="1"/>
<circle cx="367.4" cy="454.5" r="11.1" fill="none" stroke="#3e3e3e" stroke-width="1"/>
<circle cx="367.4" cy="494.3" r="11.1" fill="none" stroke="#3e3e3e" stroke-width="1"/>
<circle cx="367.4" cy="534.1" r="11.1" fill="none" stroke="#3e3e3e" stroke-width="1"/>
<circle cx="367.4" cy="573.9" r="11.1" fill="none" stroke="#b8b8b8" stroke-width="1"/>
<circle cx="367.4" cy="613.7" r="11.1" fill="none" stroke="#b8b8b8" stroke-width="1"/>
<circle cx="367.4" cy="653.5" r="11.1" fill="none" stroke="#b8b8b8" stroke-width="1"/>
<circle cx="367.4" cy="693.3" r="11.1" fill="none" stroke="#b8b8b8" stroke-width="1"/>
<circle cx="404.3" cy="235.6" r="11.1" fill="none" stroke="#3e3e3e" stroke-width="1"/>
<circle cx="404.3" cy="275.4" r="11.1" fill="none" stroke="#3e3e3e" stroke-width="1"/>
<circle cx="404.3" cy="315.2" r="11.1" fill="none" stroke="#3e3e3e" stroke-width="1"/>
<circle cx="404.3" cy="355" r="11.1" fill="none" stroke="#b8b8b8" stroke-width="1"/>
<circle cx="404.3" cy="394.8" r="11.1" fill="none" stroke="#b8b8b8" stroke-width="1"/>
<circle cx="404.3" cy="434.6" r="11.1" fill="none" stroke="#b8b8b8" stroke-width="1"/>
<circle cx="404.3" cy="474.4" r="11.1" fill="none" stroke="#b8b8b8" stroke-width="1"/>
<circle cx="404.3" cy="514.2" r="11.1" fill="none" stroke="#b8b8b8" stroke-width="1"/>
<circle cx="404.3" cy="554" r="11.1" fill="none" stroke="#b8b8b8" stroke-width="1"/>
<circle cx="404.3" cy="593.8" r="11.1" fill="none" stroke="#3e3e3e" stroke-width="1"/>
<circle cx="404.3" cy="633.6" r="11.1" fill="none" stroke="#3e3e3e" stroke-width="1"/>
<circle cx="404.3" cy="673.4" r="11.1" fill="none" stroke="#3e3e3e" stroke-width="1"/>
<circle cx="456.3" cy="215.7" r="11.1" fill="none" stroke="#b8b8b8" stroke-width="1"/>
<circle cx="456.3" cy="255.5" r="11.1" fill="none" stroke="#3e3e3e" stroke-width="1"/>
<circle cx="456.3" cy="295.3" r="11.1" fill="none" stroke="#3e3e3e" stroke-width="1"/>
<circle cx="456.3" cy="335.1" r="11.1" fill="none" stroke="#3e3e3e" stroke-width="1"/>
<circle cx="456.3" cy="374.9" r="11.1" fill="none" stroke="#b8b8b8" stroke-width="1"/>
<circle cx="456.3" cy="414.7" r="11.1" fill="none" stroke="#b8b8b8" stroke-width="1"/>
<circle cx="456.3" cy="454.5" r="11.1" fill="none" stroke="#b8b8b8" stroke-width="1"/>
<circle cx="456.3" cy="494.3" r="11.1" fill="none" stroke="#b8b8b8" stroke-width="1"/>
<circle cx="456.3" cy="534.1" r="11.1" fill="none" stroke="#b8b8b8" stroke-width="1"/>
<circle cx="456.3" cy="573.9" r="11.1" fill="none" stroke="#b8b8b8" stroke-width="1"/>
<circle cx="456.3" cy="613.7" r="11.1" fill="none" stroke="#3e3e3e" stroke-width="1"/>
<circle cx="456.3" cy="653.5" r="11.1" fill="none" stroke="#3e3e3e" stroke-width="1"/>
<circle cx="456.3" cy="693.3" r="11.1" fill="none" stroke="#3e3e3e" stroke-width="1"/>
<circle cx="493.9" cy="235.6" r="11.1" fill="none" stroke="#b8b8b8" stroke-width="1"/>
<circle cx="493.9" cy="275.4" r="11.1" fill="none" stroke="#b8b8b8" stroke-width="1"/>
<circle cx="493.9" cy="315.2" r="11.1" fill="none" stroke="#b8b8b8" stroke-width="1"/>
<circle cx="493.9" cy="355" r="11.1" fill="none" stroke="#b8b8b8" stroke-width="1"/>
<circle cx="493.9" cy="394.8" r="11.1" fill="none" stroke="#3e3e3e" stroke-width="1"/>
<circle cx="493.9" cy="434.6" r="11.1" fill="none" stroke="#3e3e3e" stroke-width="1"/>
<circle cx="493.9" cy="474.4" r="11.1" fill="none" stroke="#3e3e3e" stroke-width="1"/>
<circle cx="493.9" cy="514.2" r="11.1" fill="none" stroke="#3e3e3e" stroke-width="1"/>
<circle cx="493.9" cy="554" r="11.1" fill="none" stroke="#3e3e3e" stroke-width="1"/>
<circle cx="493.9" cy="593.8" r="11.1" fill="none" stroke="#b8b8b8" stroke-width="1"/>
<circle cx="493.9" cy="633.6" r="11.1" fill="none" stroke="#b8b8b8" stroke-width="1"/>
<circle cx="493.9" cy="673.4" r="11.1" fill="none" stroke="#b8b8b8" stroke-width="1"/>
<circle cx="592.1" cy="215.7" r="8" fill="none" stroke="#b8b8b8" stroke-width="1"/>
<circle cx="592.1" cy="255.5" r="11.1" fill="none" stroke="#b8b8b8" stroke-width="1"/>
<circle cx="592.1" cy="295.3" r="11.1" fill="none" stroke="#b8b8b8" stroke-width="1"/>
<circle cx="592.1" cy="335.1" r="11.1" fill="none" stroke="#b8b8b8" stroke-width="1"/>
<circle cx="592.1" cy="374.9" r="11.1" fill="none" stroke="#3e3e3e" stroke-width="1"/>
<circle cx="592.1" cy="414.7" r="11.1" fill="none" stroke="#3e3e3e" stroke-width="1"/>
<circle cx="592.1" cy="454.5" r="11.1" fill="none" stroke="#3e3e3e" stroke-width="1"/>
<circle cx="592.1" cy="494.3" r="11.1" fill="none" stroke="#3e3e3e" stroke-width="1"/>
<circle cx="592.1" cy="534.1" r="11.1" fill="none" stroke="#3e3e3e" stroke-width="1"/>
<circle cx="592.1" cy="573.9" r="11.1" fill="none" stroke="#b8b8b8" stroke-width="1"/>
<circle cx="592.1" cy="613.7" r="11.1" fill="none" stroke="#b8b8b8" stroke-width="1"/>
<circle cx="592.1" cy="653.5" r="11.1" fill="none" stroke="#b8b8b8" stroke-width="1"/>
<circle cx="592.1" cy="693.3" r="11.1" fill="none" stroke="#b8b8b8" stroke-width="1"/>
<circle cx="629" cy="235.6" r="11.1" fill="none" stroke="#3e3e3e" stroke-width="1"/>
<circle cx="629" cy="275.4" r="11.1" fill="none" stroke="#3e3e3e" stroke-width="1"/>
<circle cx="629" cy="315.2" r="11.1" fill="none" stroke="#3e3e3e" stroke-width="1"/>
<circle cx="629" cy="355" r="11.1" fill="none" stroke="#b8b8b8" stroke-width="1"/>
<circle cx="629" cy="394.8" r="11.1" fill="none" stroke="#b8b8b8" stroke-width="1"/>
<circle cx="629" cy="434.6" r="11.1" fill="none" stroke="#b8b8b8" stroke-width="1"/>
<circle cx="629" cy="474.4" r="11.1" fill="none" stroke="#b8b8b8" stroke-width="1"/>
<circle cx="629" cy="514.2" r="11.1" fill="none" stroke="#b8b8b8" stroke-width="1"/>
<circle cx="629" cy="554" r="11.1" fill="none" stroke="#b8b8b8" stroke-width="1"/>
<circle cx="629" cy="593.8" r="11.1" fill="none" stroke="#3e3e3e" stroke-width="1"/>
<circle cx="629" cy="633.6" r="11.1" fill="none" stroke="#3e3e3e" stroke-width="1"/>
<circle cx="629" cy="673.4" r="11.1" fill="none" stroke="#3e3e3e" stroke-width="1"/>
<circle cx="681" cy="215.7" r="11.1" fill="none" stroke="#b8b8b8" stroke-width="1"/>
<circle cx="681" cy="255.5" r="11.1" fill="none" stroke="#3e3e3e" stroke-width="1"/>
<circle cx="681" cy="295.3" r="11.1" fill="none" stroke="#3e3e3e" stroke-width="1"/>
<circle cx="681" cy="335.1" r="11.1" fill="none" stroke="#3e3e3e" stroke-width="1"/>
<circle cx="681" cy="374.9" r="11.1" fill="none" stroke="#b8b8b8" stroke-width="1"/>
<circle cx="681" cy="414.7" r="11.1" fill="none" stroke="#b8b8b8" stroke-width="1"/>
<circle cx="681" cy="454.5" r="11.1" fill="none" stroke="#b8b8b8" stroke-width="1"/>
<circle cx="681" cy="494.3" r="11.1" fill="none" stroke="#b8b8b8" stroke-width="1"/>
<circle cx="681" cy="534.1" r="11.1" fill="none" stroke="#b8b8b8" stroke-width="1"/>
<circle cx="681" cy="573.9" r="11.1" fill="none" stroke="#b8b8b8" stroke-width="1"/>
<circle cx="681" cy="613.7" r="11.1" fill="none" stroke="#3e3e3e" stroke-width="1"/>
<circle cx="681" cy="653.5" r="11.1" fill="none" stroke="#3e3e3e" stroke-width="1"/>
<circle cx="681" cy="693.3" r="11.1" fill="none" stroke="#3e3e3e" stroke-width="1"/>
<circle cx="718.6" cy="235.6" r="11.1" fill="none" stroke="#b8b8b8" stroke-width="1"/>
<circle cx="718.6" cy="275.4" r="11.1" fill="none" stroke="#b8b8b8" stroke-width="1"/>
<circle cx="718.6" cy="315.2" r="11.1" fill="none" stroke="#b8b8b8" stroke-width="1"/>
<circle cx="718.6" cy="355" r="11.1" fill="none" stroke="#b8b8b8" stroke-width="1"/>
<circle cx="718.6" cy="394.8" r="11.1" fill="none" stroke="#3e3e3e" stroke-width="1"/>
<circle cx="718.6" cy="434.6" r="11.1" fill="none" stroke="#3e3e3e" stroke-width="1"/>
<circle cx="718.6" cy="474.4" r="11.1" fill="none" stroke="#3e3e3e" stroke-width="1"/>
<circle cx="718.6" cy="514.2" r="11.1" fill="none" stroke="#3e3e3e" stroke-width="1"/>
<circle cx="718.6" cy="554" r="11.1" fill="none" stroke="#3e3e3e" stroke-width="1"/>
<circle cx="718.6" cy="593.8" r="11.1" fill="none" stroke="#b8b8b8" stroke-width="1"/>
<circle cx="718.6" cy="633.6" r="11.1" fill="none" stroke="#b8b8b8" stroke-width="1"/>
<circle cx="718.6" cy="673.4" r="11.1" fill="none" stroke="#b8b8b8" stroke-width="1"/>
</svg>
</div>
<div class="abs" style="left:0;top:698px;width:714px;height:2px;background:#f0f0f0"></div>

<div id="panel" class="abs"></div>
<!-- tabs -->
<div class="abs" style="left:719px;top:87.5px;width:305px;height:609px;background:#fff;border-left:1px solid #d9d9d9;border-bottom:1px solid #d9d9d9"></div>
<div class="abs" style="left:790px;top:64.5px;width:66px;height:23.5px;background:#f0f0f0;border:1px solid #d9d9d9;border-bottom:none"></div>
<div class="abs" style="left:855px;top:64.5px;width:54px;height:23.5px;background:#f0f0f0;border:1px solid #d9d9d9;border-bottom:none"></div>
<div class="abs" style="left:719px;top:63.5px;width:72px;height:26px;background:#fff;border:1px solid #d9d9d9;border-bottom:none"></div>
<div class="lbl" style="left:727.5px;top:65px;font-size:13.5px;color:#1a1a1a">零件詳情</div>
<div class="lbl" style="left:796px;top:67px;font-size:13.5px;color:#1a1a1a">訊號途經</div>
<div class="lbl" style="left:863px;top:67px;font-size:13.5px;color:#1a1a1a">量測點</div>
<!-- U6 button -->
<div class="abs" style="left:726px;top:97px;width:292px;height:26px;background:#e1e1e1;border:2px solid #0a78d8;font-size:14px;line-height:22px;text-align:center;color:#1a1a1a"></div>
<!-- yellow field -->
<div class="abs" style="left:730.5px;top:126px;width:300px;height:25.5px;background:#ffff50;border:1px solid #8a8a8a;font-size:14px;line-height:23.5px;padding-left:3px;color:#1a1a1a"></div>
<!-- table -->
<div class="abs" style="left:1016.5px;top:152px;width:1px;height:544px;background:#e8e8e8"></div>
<div class="abs" style="left:799.5px;top:152px;width:1px;height:24px;background:#ececec"></div>
<div class="lbl" style="left:748px;top:155px;font-size:13.5px;color:#1a1a1a">引腳</div>
<div class="lbl" style="left:806.5px;top:155px;font-size:13.5px;color:#1a1a1a">訊號</div>
<div class="row" style="top:176.3px;background:#ebebeb"></div>
<div class="abs" style="left:799.5px;top:176.3px;width:1px;height:21.64px;background:#f4f4f4"></div>
<div class="row" style="top:197.94px;background:#ffffff"></div>
<div class="abs" style="left:799.5px;top:197.94px;width:1px;height:21.64px;background:#eeeeee"></div>
<div class="row" style="top:219.58px;background:#ebebeb"></div>
<div class="abs" style="left:799.5px;top:219.58px;width:1px;height:21.64px;background:#f4f4f4"></div>
<div class="row" style="top:241.22px;background:#ffffff"></div>
<div class="abs" style="left:799.5px;top:241.22px;width:1px;height:21.64px;background:#eeeeee"></div>
<div class="row" style="top:262.86px;background:#ebebeb"></div>
<div class="abs" style="left:799.5px;top:262.86px;width:1px;height:21.64px;background:#f4f4f4"></div>
<div class="row" style="top:284.5px;background:#ffffff"></div>
<div class="abs" style="left:799.5px;top:284.5px;width:1px;height:21.64px;background:#eeeeee"></div>
<div class="row" style="top:306.14px;background:#ebebeb"></div>
<div class="abs" style="left:799.5px;top:306.14px;width:1px;height:21.64px;background:#f4f4f4"></div>
<div class="row" style="top:327.78px;background:#ffffff"></div>
<div class="abs" style="left:799.5px;top:327.78px;width:1px;height:21.64px;background:#eeeeee"></div>
<div class="row" style="top:349.42px;background:#ebebeb"></div>
<div class="abs" style="left:799.5px;top:349.42px;width:1px;height:21.64px;background:#f4f4f4"></div>
<div class="row" style="top:371.06px;background:#ffffff"></div>
<div class="abs" style="left:799.5px;top:371.06px;width:1px;height:21.64px;background:#eeeeee"></div>
<div class="row" style="top:392.7px;background:#ebebeb"></div>
<div class="abs" style="left:799.5px;top:392.7px;width:1px;height:21.64px;background:#f4f4f4"></div>
<div class="row" style="top:414.34px;background:#ffffff"></div>
<div class="abs" style="left:799.5px;top:414.34px;width:1px;height:21.64px;background:#eeeeee"></div>
<div class="row" style="top:435.98px;background:#ebebeb"></div>
<div class="abs" style="left:799.5px;top:435.98px;width:1px;height:21.64px;background:#f4f4f4"></div>
<div class="row" style="top:457.62px;background:#ffffff"></div>
<div class="abs" style="left:799.5px;top:457.62px;width:1px;height:21.64px;background:#eeeeee"></div>
<div class="row" style="top:479.26px;background:#ebebeb"></div>
<div class="abs" style="left:799.5px;top:479.26px;width:1px;height:21.64px;background:#f4f4f4"></div>
<div class="row" style="top:500.9px;background:#ffffff"></div>
<div class="abs" style="left:799.5px;top:500.9px;width:1px;height:21.64px;background:#eeeeee"></div>
<div class="row" style="top:522.54px;background:#ebebeb"></div>
<div class="abs" style="left:799.5px;top:522.54px;width:1px;height:21.64px;background:#f4f4f4"></div>
<div class="row" style="top:544.18px;background:#ffffff"></div>
<div class="abs" style="left:799.5px;top:544.18px;width:1px;height:21.64px;background:#eeeeee"></div>
<div class="row" style="top:565.82px;background:#ebebeb"></div>
<div class="abs" style="left:799.5px;top:565.82px;width:1px;height:21.64px;background:#f4f4f4"></div>
<div class="row" style="top:587.46px;background:#ffffff"></div>
<div class="abs" style="left:799.5px;top:587.46px;width:1px;height:21.64px;background:#eeeeee"></div>
<div class="row" style="top:609.1px;background:#ebebeb"></div>
<div class="abs" style="left:799.5px;top:609.1px;width:1px;height:21.64px;background:#f4f4f4"></div>
<div class="row" style="top:630.74px;background:#ffffff"></div>
<div class="abs" style="left:799.5px;top:630.74px;width:1px;height:21.64px;background:#eeeeee"></div>
<div class="row" style="top:652.38px;background:#ebebeb"></div>
<div class="abs" style="left:799.5px;top:652.38px;width:1px;height:21.64px;background:#f4f4f4"></div>
<div class="row" style="top:674.02px;background:#ffffff"></div>
<div class="abs" style="left:799.5px;top:674.02px;width:1px;height:21.64px;background:#eeeeee"></div><svg class="abs" style="left:714px;top:62px" width="310" height="638" viewBox="714 62 310 638"><g font-family="Liberation Sans, sans-serif" font-size="14" fill="#1a1a1a"><text x="764.5" y="192" text-anchor="middle" textLength="8.43" lengthAdjust="spacingAndGlyphs">1</text>
<text x="806.5" y="192" textLength="87.02" lengthAdjust="spacingAndGlyphs">N227951752</text>
<text x="764.5" y="213.64" text-anchor="middle" textLength="8.43" lengthAdjust="spacingAndGlyphs">2</text>
<text x="806.5" y="213.64" textLength="55.2" lengthAdjust="spacingAndGlyphs">ISENIN+</text>
<text x="764.5" y="235.28" text-anchor="middle" textLength="8.43" lengthAdjust="spacingAndGlyphs">3</text>
<text x="806.5" y="235.28" textLength="70.32" lengthAdjust="spacingAndGlyphs">VRD_EN_R</text>
<text x="764.5" y="256.92" text-anchor="middle" textLength="8.43" lengthAdjust="spacingAndGlyphs">4</text>
<text x="806.5" y="256.92" textLength="110.27" lengthAdjust="spacingAndGlyphs">CPU_VSS_SEN_R</text>
<text x="764.5" y="278.56" text-anchor="middle" textLength="8.43" lengthAdjust="spacingAndGlyphs">5</text>
<text x="806.5" y="278.56" textLength="112.25" lengthAdjust="spacingAndGlyphs">CPU_VCC_SEN_R</text>
<text x="764.5" y="300.2" text-anchor="middle" textLength="8.43" lengthAdjust="spacingAndGlyphs">6</text>
<text x="806.5" y="300.2" textLength="87.02" lengthAdjust="spacingAndGlyphs">N368173714</text>
<text x="764.5" y="321.84" text-anchor="middle" textLength="8.43" lengthAdjust="spacingAndGlyphs">7</text>
<text x="806.5" y="321.84" textLength="87.02" lengthAdjust="spacingAndGlyphs">N368173619</text>
<text x="764.5" y="343.48" text-anchor="middle" textLength="8.43" lengthAdjust="spacingAndGlyphs">8</text>
<text x="806.5" y="343.48" textLength="57.52" lengthAdjust="spacingAndGlyphs">6376_FB</text>
<text x="764.5" y="365.12" text-anchor="middle" textLength="8.43" lengthAdjust="spacingAndGlyphs">9</text>
<text x="806.5" y="365.12" textLength="87.02" lengthAdjust="spacingAndGlyphs">N368173566</text>
<text x="764.5" y="386.76" text-anchor="middle" textLength="16.87" lengthAdjust="spacingAndGlyphs">10</text>
<text x="806.5" y="386.76" textLength="87.02" lengthAdjust="spacingAndGlyphs">N368174424</text>
<text x="764.5" y="408.4" text-anchor="middle" textLength="16.87" lengthAdjust="spacingAndGlyphs">11</text>
<text x="806.5" y="408.4" textLength="14.24" lengthAdjust="spacingAndGlyphs">---</text>
<text x="764.5" y="430.04" text-anchor="middle" textLength="16.87" lengthAdjust="spacingAndGlyphs">12</text>
<text x="806.5" y="430.04" textLength="14.24" lengthAdjust="spacingAndGlyphs">---</text>
<text x="764.5" y="451.68" text-anchor="middle" textLength="16.87" lengthAdjust="spacingAndGlyphs">13</text>
<text x="806.5" y="451.68" textLength="14.24" lengthAdjust="spacingAndGlyphs">---</text>
<text x="764.5" y="473.32" text-anchor="middle" textLength="16.87" lengthAdjust="spacingAndGlyphs">14</text>
<text x="806.5" y="473.32" textLength="83.93" lengthAdjust="spacingAndGlyphs">VRM_PGD_R</text>
<text x="764.5" y="494.96" text-anchor="middle" textLength="16.87" lengthAdjust="spacingAndGlyphs">15</text>
<text x="806.5" y="494.96" textLength="87.02" lengthAdjust="spacingAndGlyphs">N368173572</text>
<text x="764.5" y="516.6" text-anchor="middle" textLength="16.87" lengthAdjust="spacingAndGlyphs">16</text>
<text x="806.5" y="516.6" textLength="84.47" lengthAdjust="spacingAndGlyphs">VID_SOUT_R</text>
<text x="764.5" y="538.24" text-anchor="middle" textLength="16.87" lengthAdjust="spacingAndGlyphs">17</text>
<text x="806.5" y="538.24" textLength="121.34" lengthAdjust="spacingAndGlyphs">VID_VIDALERT#_R</text>
<text x="764.5" y="559.88" text-anchor="middle" textLength="16.87" lengthAdjust="spacingAndGlyphs">18</text>
<text x="806.5" y="559.88" textLength="80.1" lengthAdjust="spacingAndGlyphs">VID_SCLK_R</text>
<text x="764.5" y="581.52" text-anchor="middle" textLength="16.87" lengthAdjust="spacingAndGlyphs">19</text>
<text x="806.5" y="581.52" textLength="64.13" lengthAdjust="spacingAndGlyphs">VR_HOT#</text>
<text x="764.5" y="603.16" text-anchor="middle" textLength="16.87" lengthAdjust="spacingAndGlyphs">20</text>
<text x="806.5" y="603.16" textLength="66.19" lengthAdjust="spacingAndGlyphs">SMBDATA</text>
<text x="764.5" y="624.8" text-anchor="middle" textLength="16.87" lengthAdjust="spacingAndGlyphs">21</text>
<text x="806.5" y="624.8" textLength="87.02" lengthAdjust="spacingAndGlyphs">N368173782</text>
<text x="764.5" y="646.44" text-anchor="middle" textLength="16.87" lengthAdjust="spacingAndGlyphs">22</text>
<text x="806.5" y="646.44" textLength="56.98" lengthAdjust="spacingAndGlyphs">SMBCLK</text>
<text x="764.5" y="668.08" text-anchor="middle" textLength="16.87" lengthAdjust="spacingAndGlyphs">23</text>
<text x="806.5" y="668.08" textLength="87.02" lengthAdjust="spacingAndGlyphs">N368173744</text>
<text x="764.5" y="689.72" text-anchor="middle" textLength="16.87" lengthAdjust="spacingAndGlyphs">24</text>
<text x="806.5" y="689.72" textLength="87.02" lengthAdjust="spacingAndGlyphs">N368174019</text>
<text x="733.5" y="141.7" textLength="157.38" lengthAdjust="spacingAndGlyphs">ISL6376CRZ_QFN48-HF</text>
<text x="872" y="114.4" text-anchor="middle" textLength="19.17" lengthAdjust="spacingAndGlyphs">U6</text></g></svg>
<svg class="abs" style="left:714px;top:62px" width="310" height="638" viewBox="714 62 310 638"><text x="887.8" y="685" font-family="Liberation Sans, sans-serif" font-size="18.6" letter-spacing="0.6" fill="#c8c8c8" stroke="#c8c8c8" stroke-width="0.3">bbs.pigoo.com</text></svg>
</body></html>
